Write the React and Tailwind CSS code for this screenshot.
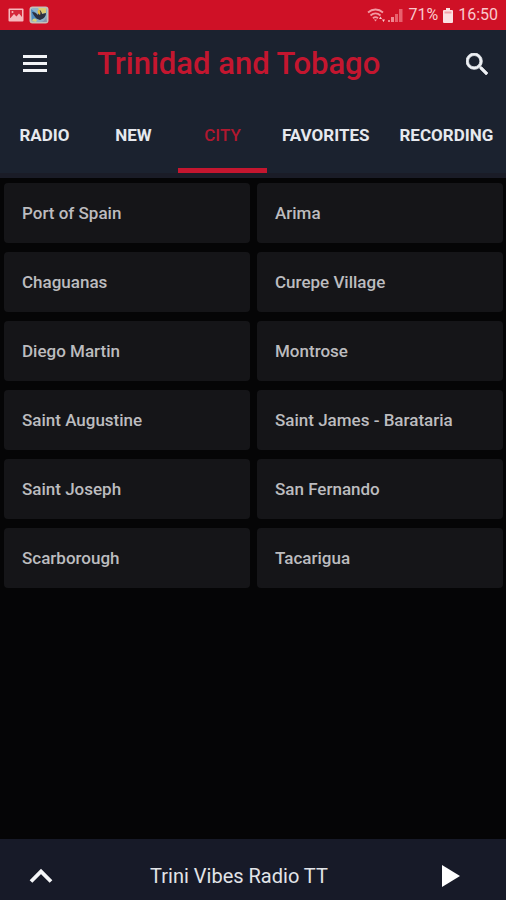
import { useState } from "react";
import clsx from "clsx";

const tabs = ["Radio", "New", "City", "Favorites", "Recording"];

const cities = [
  "Port of Spain",
  "Arima",
  "Chaguanas",
  "Curepe Village",
  "Diego Martin",
  "Montrose",
  "Saint Augustine",
  "Saint James - Barataria",
  "Saint Joseph",
  "San Fernando",
  "Scarborough",
  "Tacarigua",
];

const PictureIcon = () => (
  <svg viewBox="0 0 16 14" className="h-[14px] w-4" aria-hidden="true">
    <rect x="0.5" y="0.5" width="15" height="13" rx="1" fill="#f6b9bd" />
    <rect x="2" y="2" width="12" height="8" fill="#d5283a" />
    <path d="M2 10.5 6 6l2.5 2.5L11 5.5l3 3.5v2H2z" fill="#f6b9bd" />
    <circle cx="4.5" cy="4" r="1" fill="#f6b9bd" />
  </svg>
);

const AppIcon = () => (
  <svg viewBox="0 0 20 18" className="h-[18px] w-5" aria-hidden="true">
    <rect x="0.5" y="0.5" width="19" height="17" rx="3" fill="#c4c2ba" />
    <rect x="2" y="2" width="16" height="14" rx="2" fill="#8fb2c8" />
    <path d="M2 3 7 7l2 5-3 3H3z" fill="#4f8ec0" />
    <path d="M9 2h8v5l-5 1z" fill="#dccb72" />
    <path d="M3 6c3 0 4 1 6 3 0-2 1-4 2-5 1 1 2 3 2 4l4-1c0 4-3 6-6 7-4-1-6-4-8-8z" fill="#2b3040" />
    <path d="M9 4c2 0 3 2 2 5-2-1-3-3-2-5z" fill="#e8bd3a" />
    <path d="M3 15c1-3 3-3 5-1l-1 2z" fill="#d8d27e" />
    <path d="M11 16c3 0 5-2 6-5l1 5z" fill="#8f95a8" />
  </svg>
);

const WifiIcon = () => (
  <svg viewBox="0 0 19 15" className="h-[15px] w-[19px]" fill="none" stroke="#f29aa2" strokeWidth="1.8" aria-hidden="true">
    <path d="M1 4.5C5.500 0.500 11.500 0.500 16 4.500" />
    <path d="M3.500 7.500C6.500 4.800 10.500 4.800 13.500 7.500" />
    <path d="M6 10.200c1.500-1.300 3.500-1.300 5 0" />
    <path d="M7 11.500h3l-1.500 2z" fill="#f29aa2" stroke="none" />
    <path d="m12 11 1.500-2.500L15 11zM15 11.500h3L16.500 14z" fill="#f9cdd0" stroke="none" />
  </svg>
);

const SignalIcon = () => (
  <svg viewBox="0 0 15 15" className="h-[15px] w-[15px]" aria-hidden="true">
    <path d="M0 12h2v2H0zM3 9h3v5H3z" fill="#f0868f" />
    <path d="M7 6h3v8H7zM11 1h3.500v13H11z" fill="#e8606d" />
  </svg>
);

const BatteryIcon = () => (
  <svg viewBox="0 0 10 15" className="h-[15px] w-[10px]" aria-hidden="true">
    <path d="M3 0h4v2h2a1 1 0 0 1 1 1v11a1 1 0 0 1-1 1H1a1 1 0 0 1-1-1V3a1 1 0 0 1 1-1h2z" fill="#fbe1e3" />
    <path d="M1.500 3.500h7v2h-7z" fill="#f2a3aa" />
  </svg>
);

const StatusBar = () => (
  <div className="flex h-[30px] items-center justify-between bg-[#cf1126] px-2 text-[#f9c9cd]">
    <div className="flex items-center gap-[5px]">
      <PictureIcon />
      <AppIcon />
    </div>
    <div className="flex items-center gap-[5px] text-base leading-none">
      <div className="flex items-center gap-[2px]">
        <WifiIcon />
        <SignalIcon />
      </div>
      <span>71%</span>
      <BatteryIcon />
      <span>16:50</span>
    </div>
  </div>
);

const Header = () => (
  <header className="flex h-[68px] items-center px-[15px]">
    <button type="button" aria-label="Menu" className="flex size-10 items-center justify-center">
      <svg viewBox="0 0 24 18" className="h-[18px] w-6" fill="#f2f4f7" aria-hidden="true">
        <path d="M0 0h24v3H0zM0 7h24v3H0zM0 14h24v3H0z" />
      </svg>
    </button>
    <h1 className="flex-1 pl-[42px] text-[31px] leading-10 font-medium text-[#c4162f]">
      Trinidad and Tobago
    </h1>
    <button type="button" aria-label="Search" className="flex size-7 items-center justify-center">
      <svg
        viewBox="3 3 17.500 17.500"
        className="size-[22px]"
        fill="#eef1f5"
        stroke="#eef1f5"
        strokeWidth="0.600"
        aria-hidden="true"
      >
        <path d="M15.500 14h-.79l-.28-.27A6.471 6.471 0 0 0 16 9.500 6.500 6.500 0 1 0 9.500 16c1.610 0 3.090-.59 4.230-1.570l.27.28v.79l5 4.990L20.490 19l-4.990-5zm-6 0C7.010 14 5 11.990 5 9.500S7.010 5 9.500 5 14 7.010 14 9.500 11.990 14 9.500 14z" />
      </svg>
    </button>
  </header>
);

const TabBar = ({ active, onChange }) => (
  <nav className="flex h-[75px] overflow-hidden">
    {tabs.map((tab) => (
      <button
        key={tab}
        type="button"
        onClick={() => onChange(tab)}
        className={clsx(
          "min-w-[89px] shrink-0 border-y-[5px] border-t-transparent px-[15px] text-[17px] uppercase",
          tab === active
            ? "border-b-[#c4162f] font-medium text-[#b0182f]"
            : "border-b-transparent font-bold text-[#e6e9ee]"
        )}
      >
        {tab}
      </button>
    ))}
  </nav>
);

const Player = () => (
  <footer className="flex h-[61px] items-center justify-between bg-[#171a28] px-[21px] pt-3">
    <button type="button" aria-label="Expand player" className="flex size-10 items-center justify-center">
      <svg viewBox="0 0 24 16" className="h-4 w-6" fill="none" stroke="#f5f6f8" strokeWidth="3.800" aria-hidden="true">
        <path d="M2 13.500 12 3.500l10 10" />
      </svg>
    </button>
    <p className="text-xl text-[#e2e4e8]">Trini Vibes Radio TT</p>
    <button type="button" aria-label="Play" className="flex h-10 w-[68px] items-center justify-center">
      <svg viewBox="0 0 18 22" className="h-[22px] w-[18px]" fill="#ffffff" aria-hidden="true">
        <path d="M0 0v22l18-11z" />
      </svg>
    </button>
  </footer>
);

const App = () => {
  const [active, setActive] = useState("City");

  return (
    <div className="flex min-h-screen flex-col bg-[#050506] font-['Roboto',sans-serif]">
      <StatusBar />
      <div className="border-b-[5px] border-[#1a1c27] bg-[#1b222f]">
        <Header />
        <TabBar active={active} onChange={setActive} />
      </div>
      <main className="flex-1 px-[3px] pt-[5px] pl-1">
        <ul className="grid grid-cols-2 gap-x-[7px] gap-y-[9px]">
          {cities.map((city) => (
            <li key={city}>
              <button
                type="button"
                className="h-[60px] w-full rounded-sm bg-[#151518] px-[18px] pt-[2px] text-left text-[17px] font-medium text-[#bcbcbf]"
              >
                {city}
              </button>
            </li>
          ))}
        </ul>
      </main>
      <Player />
    </div>
  );
};

export default App;
